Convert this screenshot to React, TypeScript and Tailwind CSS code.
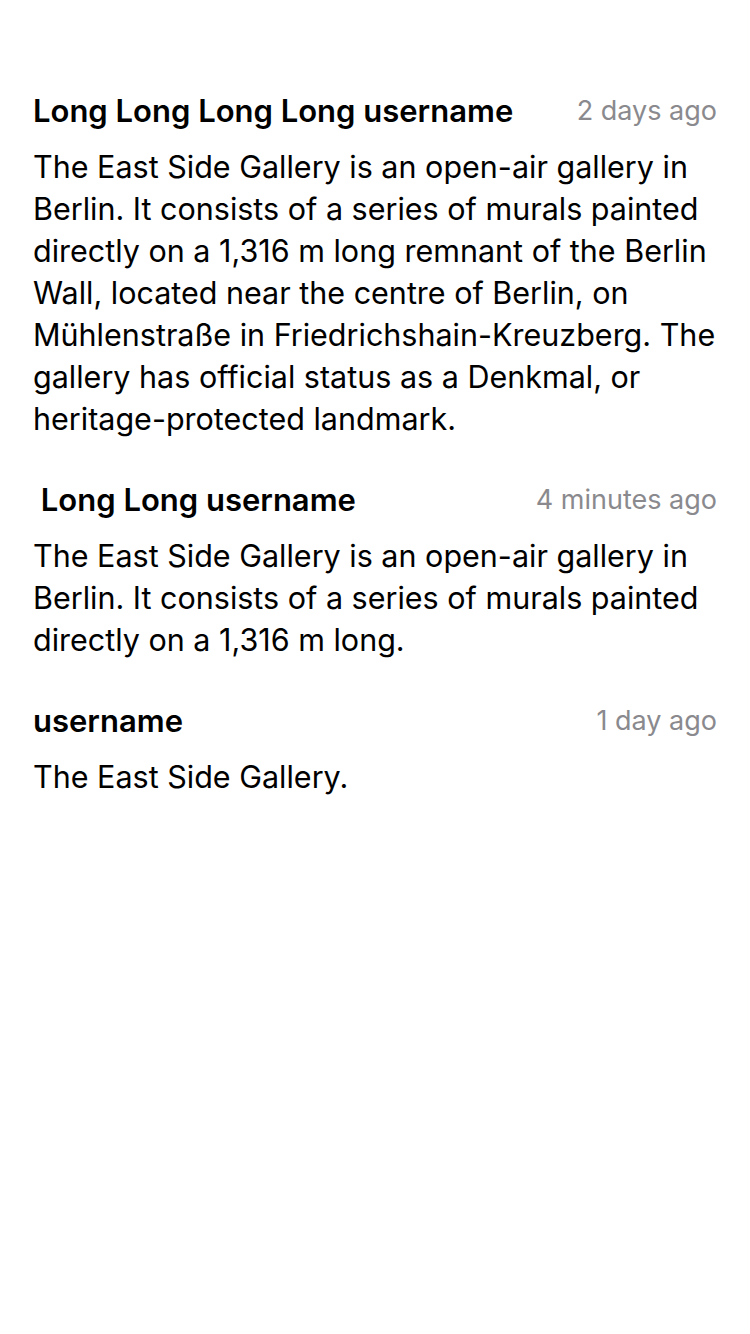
const comments = [
  {
    user: "Long Long Long Long username",
    time: "2 days ago",
    body: "The East Side Gallery is an open-air gallery in Berlin. It consists of a series of murals painted directly on a 1,316 m long remnant of the Berlin Wall, located near the centre of Berlin, on Mühlenstraße in Friedrichshain-Kreuzberg. The gallery has official status as a Denkmal, or heritage-protected landmark.",
  },
  {
    user: "\u00A0Long Long username",
    time: "4 minutes ago",
    body: "The East Side Gallery is an open-air gallery in Berlin. It consists of a series of murals painted directly on a 1,316 m long.",
  },
  {
    user: "username",
    time: "1 day ago",
    body: "The East Side Gallery.",
  },
];

export default function App() {
  return (
    <div className="min-h-[1334px] w-[750px] bg-white px-[33px] pt-[90px] font-['Inter',sans-serif] text-black">
      <div className="flex flex-col gap-[39px]">
        {comments.map((c, i) => (
          <div key={i} className="flex flex-col gap-[14px]">
            <div className="flex items-center justify-between gap-4">
              <span className="text-[31px] font-semibold leading-[42px] whitespace-pre">{c.user}</span>
              <span className="text-[27px] leading-[42px] text-[#8a8a8e]">{c.time}</span>
            </div>
            <p className="text-[30.5px] leading-[42px]">{c.body}</p>
          </div>
        ))}
      </div>
    </div>
  );
}
